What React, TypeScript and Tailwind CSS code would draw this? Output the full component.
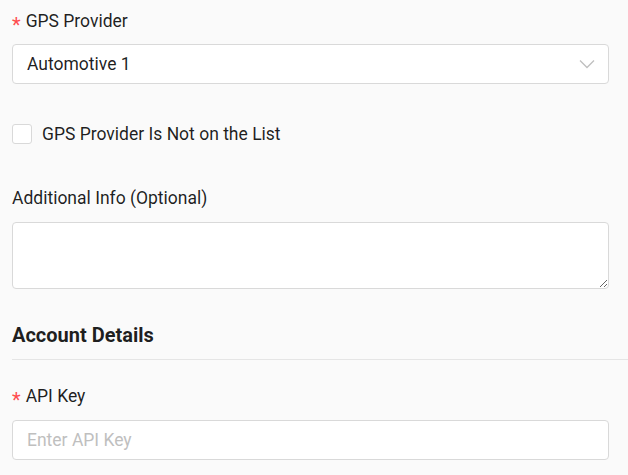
const font = { fontFamily: 'Roboto, "Liberation Sans", sans-serif' };

function Label({ text, required }: { text: string; required?: boolean }) {
  return (
    <div className="flex h-6 items-center pt-px text-[17.5px] leading-6 text-[rgba(0,0,0,0.88)]">
      {required && (
        <span className="relative top-[4px] mr-[5px] text-[20px] leading-none text-[#ff4d4f]">*</span>
      )}
      {text}
    </div>
  );
}

function Chevron() {
  return (
    <svg width="16" height="10" viewBox="0 0 16 10" fill="none" className="text-[#bfbfbf]">
      <path d="M1 1.5 L8 8.5 L15 1.5" stroke="currentColor" strokeWidth="1.3" />
    </svg>
  );
}

export default function App() {
  return (
    <div className="min-h-[475px] bg-[#fafafa] pl-3 pt-2" style={font}>
      <Label text="GPS Provider" required />
      <div className="mr-[19px] mt-3 flex h-10 items-center justify-between rounded-[4px] border border-[#d9d9d9] bg-white pl-[14px] pr-[13px] text-[17.5px] text-[rgba(0,0,0,0.88)]">
        <span>Automotive 1</span>
        <Chevron />
      </div>

      <label className="mt-[38px] flex h-6 items-center gap-[10px] text-[17.5px] text-[rgba(0,0,0,0.88)]">
        <span className="h-5 w-5 rounded-[3px] border border-[#d9d9d9] bg-white" />
        GPS Provider Is Not on the List
      </label>

      <div className="mt-[39px]">
        <Label text="Additional Info (Optional)" />
      </div>
      <textarea
        className="mt-[13px] block h-[67px] w-[calc(100%-19px)] rounded-[4px] border border-[#d9d9d9] bg-white px-[14px] py-2 text-base outline-none"
        aria-label="Additional Info"
      />

      <div className="mt-[34px] border-b border-[#e5e5e5] pb-[12px]">
        <h3 className="text-[20px] font-bold leading-6 text-[rgba(0,0,0,0.88)]">Account Details</h3>
      </div>

      <div className="mt-[23px]">
        <Label text="API Key" required />
      </div>
      <input
        placeholder="Enter API Key"
        className="mt-[13px] block h-10 w-[calc(100%-19px)] rounded-[4px] border border-[#d9d9d9] bg-white px-[14px] text-[17.5px] text-[rgba(0,0,0,0.88)] outline-none placeholder:text-[#bfbfbf]"
      />
    </div>
  );
}
